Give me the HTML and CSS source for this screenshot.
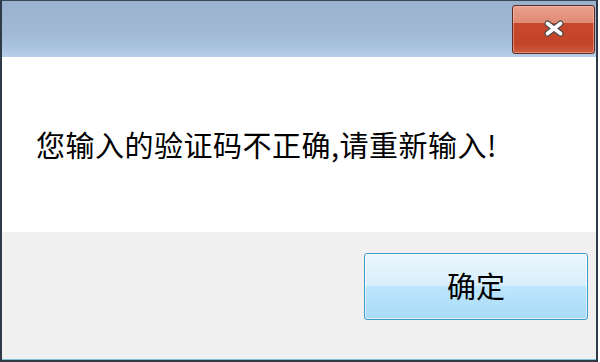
FILE: index.html
```html
<!DOCTYPE html>
<html lang="zh-CN">
<head>
<meta charset="utf-8">
<title>提示</title>
<link rel="stylesheet" href="styles.css">
</head>
<body>
<div class="window">
  <div class="titlebar">
    <div class="close">
      <svg width="22" height="17" viewBox="0 0 22 17">
        <path d="M4.5 3.5 L17.5 13.5 M17.5 3.5 L4.5 13.5" stroke="#4a4a4a" stroke-width="6" stroke-linecap="round" fill="none"/>
        <path d="M4.5 3.5 L17.5 13.5 M17.5 3.5 L4.5 13.5" stroke="#ffffff" stroke-width="3.8" stroke-linecap="round" fill="none"/>
      </svg>
    </div>
  </div>
  <div class="content">
    <p class="message">您输入的验证码不正确,请重新输入!</p>
  </div>
  <div class="footer">
    <button class="ok">确定</button>
  </div>
</div>
</body>
</html>
```

FILE: styles.css
```css
* { box-sizing: border-box; }
html, body {
  margin: 0;
  padding: 0;
  background: #ffffff;
  width: 600px;
  height: 362px;
  overflow: hidden;
}
.window {
  width: 598px;
  height: 362px;
  display: flex;
  flex-direction: column;
  border-top: 1px solid #3a4654;
  border-left: 2px solid #2e3a48;
  border-right: 2px solid #2e3a48;
  border-bottom: 2px solid #2e3a48;
  font-family: "Noto Sans CJK SC", "Noto Sans", sans-serif;
}
.titlebar {
  height: 56px;
  flex: none;
  display: flex;
  justify-content: flex-end;
  align-items: flex-start;
  padding: 4px 1px 0 0;
  background: linear-gradient(to bottom, #9bb2cf 0%, #a0b8d4 55%, #a9c2de 80%, #b7cfe9 100%);
}
.close {
  width: 83px;
  height: 49px;
  border: 1px solid #5a2c24;
  border-radius: 3px;
  display: flex;
  align-items: center;
  justify-content: center;
  padding-bottom: 2px;
  background: linear-gradient(to bottom, #e8a08e 0%, #df8a74 36%, #c8482e 37%, #c24428 80%, #cc5a40 100%);
  box-shadow: inset 0 0 0 1px rgba(255, 200, 180, 0.5);
}
.content {
  height: 175px;
  flex: none;
  background: #ffffff;
  display: flex;
  align-items: center;
  padding-left: 34px;
  padding-bottom: 1px;
}
.message {
  margin: 0;
  font-size: 29px;
  line-height: 1;
  color: #000000;
  letter-spacing: 0.5px;
}
.footer {
  flex: 1;
  background: #f0f0f0;
  display: flex;
  justify-content: flex-end;
  align-items: flex-start;
  padding: 21px 8px 0 0;
  border-bottom: 1px solid #7fc2d8;
}
.ok {
  width: 224px;
  height: 67px;
  border: 1px solid #3c9ccf;
  border-radius: 3px;
  background: linear-gradient(to bottom, #eaf6fd 0%, #d9effc 48%, #bee6fd 50%, #a8dbf7 100%);
  box-shadow: inset 0 0 0 1px rgba(255, 255, 255, 0.6);
  font-family: "Noto Sans CJK SC", "Noto Sans", sans-serif;
  font-size: 29px;
  color: #000000;
  padding: 0 0 2px 0;
  line-height: 1;
}
```
